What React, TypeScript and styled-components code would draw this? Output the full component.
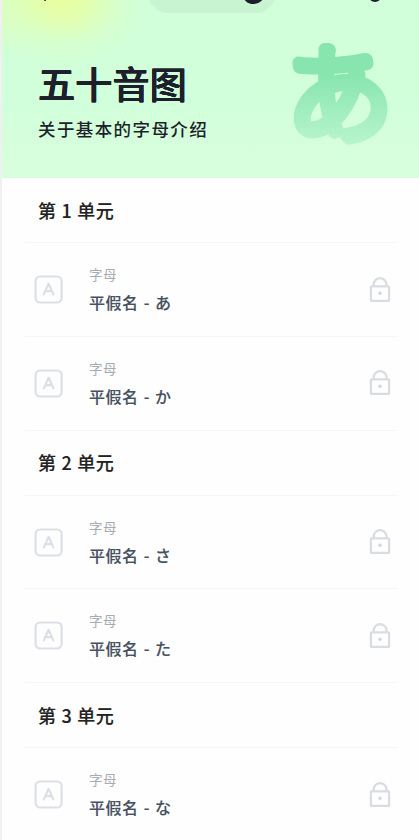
import React from 'react';
import styled, { createGlobalStyle } from 'styled-components';

const GlobalStyle = createGlobalStyle`
  * { box-sizing: border-box; }
  body {
    margin: 0;
    background: #fefefe;
    font-family: "Noto Sans CJK SC", "Noto Sans CJK JP", sans-serif;
    overflow: hidden;
  }
`;

const Page = styled.main`
  height: 840px;
  overflow: hidden;
  border-left: 2px solid #f0f0f1;
  background: #fefefe;
`;

const Hero = styled.header`
  position: relative;
  height: 178.4px;
  padding: 58px 0 0 36px;
  color: #1d1f2b;
  background:
    radial-gradient(ellipse 88px 68px at 61px 0, #e9ff9f 0%, rgba(232, 255, 164, 0.78) 28%, rgba(224, 255, 185, 0.34) 65%, rgba(209, 255, 218, 0) 100%),
    radial-gradient(ellipse 60px 60px at 0 0, rgba(222, 255, 184, 0.7), rgba(209, 255, 218, 0)),
    linear-gradient(#d0ffda, #d0ffda 45%, #d8ffdd);
`;

const Title = styled.h1`
  margin: 0;
  height: 50px;
  font-size: 37.2px;
  line-height: 50px;
  font-weight: 500;
  white-space: nowrap;
  text-shadow: 0.4px 0 currentColor, -0.4px 0 currentColor, 0 0.4px currentColor, 0 -0.4px currentColor;
`;

const Subtitle = styled.p`
  margin: 8px 0 0;
  font-size: 17.5px;
  line-height: 26px;
  font-weight: 500;
  letter-spacing: 1.4px;
  white-space: nowrap;
`;

const StatusPill = styled.div`
  position: absolute;
  left: 146px;
  top: -28px;
  width: 128px;
  height: 41px;
  border-radius: 21px;
  background: #c8f4d1;
`;

const Dot = styled.i<{ $x: number; $size: number; $bottom: number }>`
  position: absolute;
  left: ${p => p.$x - p.$size / 2}px;
  top: ${p => p.$bottom - p.$size}px;
  width: ${p => p.$size}px;
  height: ${p => p.$size}px;
  border-radius: 50%;
  background: #1d1f2b;
`;

const KanaArt = styled.svg`
  position: absolute;
  left: 268px;
  top: 10px;
  width: 145px;
  height: 165px;
  overflow: visible;
`;

const Section = styled.section`
  height: 252.4px;
`;

const SectionTitle = styled.h2`
  display: flex;
  align-items: center;
  height: 65px;
  margin: 0 21px 0 23px;
  padding: 0 0 1px 13px;
  border-bottom: 1px solid #f5f6f7;
  color: #222;
  font-size: 18px;
  line-height: 26px;
  font-weight: 500;
  letter-spacing: 0.7px;
  -webkit-text-stroke: 0.15px currentColor;
`;

const Lesson = styled.article`
  display: flex;
  align-items: center;
  height: 93.7px;
  margin: 0 21px 0 23px;
  padding: 0 6px 0 9px;
  border-bottom: 1px solid #f5f6f7;
`;

const LetterIcon = styled.svg`
  flex: none;
  width: 29px;
  height: 29px;
`;

const LessonText = styled.div`
  flex: 1;
  margin-left: 26px;
`;

const Category = styled.div`
  height: 20px;
  color: #a8abb0;
  font-size: 13.5px;
  line-height: 20px;
  letter-spacing: 0.4px;
`;

const Name = styled.div`
  margin-top: 6px;
  height: 25px;
  color: #465061;
  font-size: 16px;
  line-height: 25px;
  font-weight: 500;
  letter-spacing: 0.55px;
  word-spacing: 0.9px;
  white-space: nowrap;
  -webkit-text-stroke: 0.15px currentColor;
`;

const LockIcon = styled.svg`
  flex: none;
  width: 24px;
  height: 28px;
`;

const units = [
  { number: 1, kana: ['あ', 'か'] },
  { number: 2, kana: ['さ', 'た'] },
  { number: 3, kana: ['な'] },
];

function LessonRow({ kana }: { kana: string }) {
  return (
    <Lesson>
      <LetterIcon viewBox="0 0 29 29" fill="none" stroke="#dce0e6" strokeWidth="2.2" strokeLinecap="round" strokeLinejoin="round">
        <rect x="1.6" y="1.5" width="26" height="26" rx="4.5" />
        <path d="M9.8 19.4 14.6 8.8 19.4 19.4M11.4 16.2h6.4" />
      </LetterIcon>
      <LessonText>
        <Category>字母</Category>
        <Name>平假名 - {kana}</Name>
      </LessonText>
      <LockIcon viewBox="0 0 24 28" fill="none" stroke="#d9dde2" strokeWidth="2.3">
        <rect x="2.9" y="10.3" width="18.2" height="14.6" rx="0.7" />
        <path d="M5.7 10.1V8.5a6.4 6.4 0 0 1 12.8 0v1.6" />
        <circle cx="12" cy="17.3" r="1.8" fill="#d3d8df" stroke="none" />
      </LockIcon>
    </Lesson>
  );
}

export default function App() {
  return (
    <>
      <GlobalStyle />
      <Page>
        <Hero>
          <StatusPill />
          <Dot $x={43} $size={2} $bottom={0.6} />
          <Dot $x={251.5} $size={23} $bottom={4} />
          <Dot $x={373} $size={12} $bottom={2.3} />
          <Title>五十音图</Title>
          <Subtitle>关于基本的字母介绍</Subtitle>
          <KanaArt viewBox="0 0 145 165" aria-hidden="true">
            <defs>
              <linearGradient id="kanaFill" gradientUnits="userSpaceOnUse" x1="0" y1="-58" x2="0" y2="14">
                <stop offset="0" stopColor="#87e5ad" />
                <stop offset="1" stopColor="#bbf6ce" />
              </linearGradient>
            </defs>
            <text
              x="0"
              y="0"
              transform="translate(18 124) skewX(4.5) scale(1.03 1.04)"
              fontFamily="Noto Sans CJK JP"
              fontSize="104"
              fontWeight="100"
              fill="url(#kanaFill)"
              stroke="url(#kanaFill)"
              strokeWidth="13"
              strokeLinejoin="round"
            >
              あ
            </text>
          </KanaArt>
        </Hero>
        {units.map(unit => (
          <Section key={unit.number}>
            <SectionTitle>第 {unit.number} 单元</SectionTitle>
            {unit.kana.map(kana => <LessonRow key={kana} kana={kana} />)}
          </Section>
        ))}
      </Page>
    </>
  );
}
